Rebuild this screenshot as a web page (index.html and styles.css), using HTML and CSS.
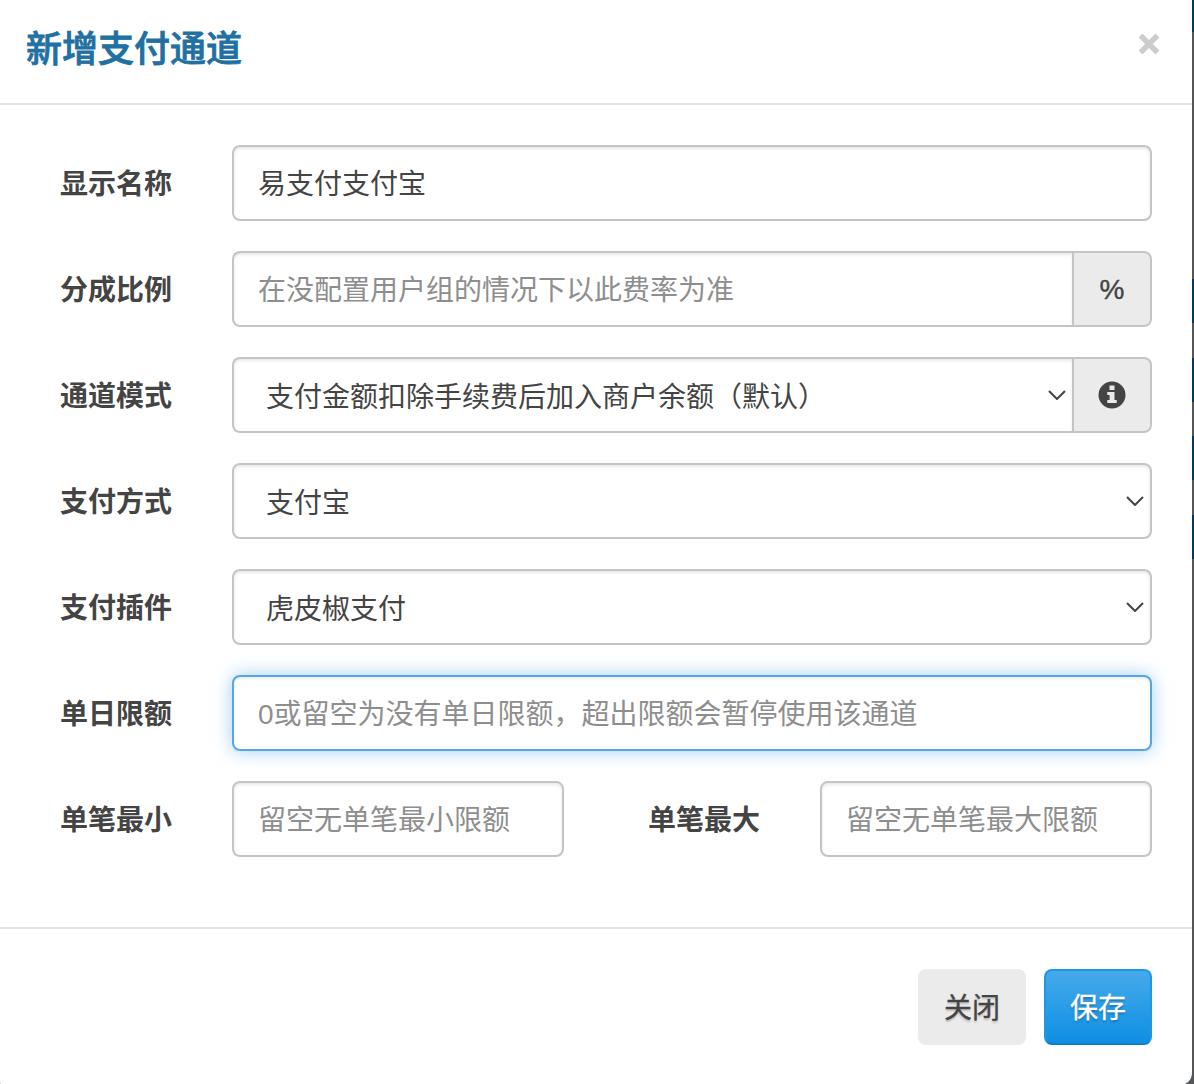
FILE: index.html
```html
<!DOCTYPE html>
<html lang="zh-CN">
<head>
    <meta charset="UTF-8">
    <meta name="viewport" content="width=device-width, initial-scale=1.0">
    <title>新增支付通道</title>
    <link rel="stylesheet" href="styles.css">
</head>
<body>
    <div class="modal">
        <div class="modal-header">
            <h4 class="modal-title">新增支付通道</h4>
            <button type="button" class="close" aria-label="Close">
                <svg width="22" height="22" viewBox="0 0 22 22"><path d="M2.5 2.5L19.5 19.5M19.5 2.5L2.5 19.5" stroke="#ccc" stroke-width="5.4"/></svg>
            </button>
        </div>
        <form class="modal-body">
            <div class="form-group">
                <label for="name">显示名称</label>
                <input type="text" class="form-control" id="name" value="易支付支付宝">
            </div>
            <div class="form-group">
                <label for="rate">分成比例</label>
                <div class="input-group">
                    <input type="text" class="form-control" id="rate" placeholder="在没配置用户组的情况下以此费率为准">
                    <span class="addon percent">%</span>
                </div>
            </div>
            <div class="form-group">
                <label for="mode">通道模式</label>
                <div class="input-group">
                    <div class="select">
                        <select class="form-control" id="mode">
                            <option>支付金额扣除手续费后加入商户余额（默认）</option>
                        </select>
                        <svg class="arrow" width="18" height="10" viewBox="0 0 18 10"><path d="M1 1L9 9L17 1"/></svg>
                    </div>
                    <span class="addon">
                        <svg width="28" height="28" viewBox="0 0 28 28">
                            <circle cx="14" cy="14" r="13.5" fill="#444"/>
                            <path d="M11.5 4.5h5v4.5h-5zM9.3 11h7.2v8h2.2v3H9.3v-3h2.3v-5H9.3z" fill="#ebebeb"/>
                        </svg>
                    </span>
                </div>
            </div>
            <div class="form-group">
                <label for="type">支付方式</label>
                <div class="select">
                    <select class="form-control" id="type">
                        <option>支付宝</option>
                    </select>
                    <svg class="arrow" width="18" height="10" viewBox="0 0 18 10"><path d="M1 1L9 9L17 1"/></svg>
                </div>
            </div>
            <div class="form-group">
                <label for="plugin">支付插件</label>
                <div class="select">
                    <select class="form-control" id="plugin">
                        <option>虎皮椒支付</option>
                    </select>
                    <svg class="arrow" width="18" height="10" viewBox="0 0 18 10"><path d="M1 1L9 9L17 1"/></svg>
                </div>
            </div>
            <div class="form-group">
                <label for="daytop">单日限额</label>
                <input type="text" class="form-control active" id="daytop" placeholder="0或留空为没有单日限额，超出限额会暂停使用该通道">
            </div>
            <div class="form-group split">
                <label for="paymin">单笔最小</label>
                <input type="text" class="form-control" id="paymin" placeholder="留空无单笔最小限额">
                <label for="paymax">单笔最大</label>
                <input type="text" class="form-control" id="paymax" placeholder="留空无单笔最大限额">
            </div>
        </form>
        <div class="modal-footer">
            <button type="button" class="btn btn-white">关闭</button>
            <button type="button" class="btn btn-primary">保存</button>
        </div>
    </div>
</body>
</html>
```
FILE: styles.css
```css
* {
    box-sizing: border-box;
}
body {
    margin: 0;
    height: 1084px;
    overflow: hidden;
    font-family: "Liberation Sans", "Noto Sans CJK SC", sans-serif;
    font-size: 28px;
    color: #444;
    /* dimmed page showing past the dialog */
    background: linear-gradient(#003a5f 0 32px, #555657 32px 279px, #003a5f 279px 323px, #555657 323px 358px, #003a5f 358px 402px, #555657 402px 436px, #003a5f 436px 480px, #555657 480px 515px, #003a5f 515px 559px, #555657 559px);
}
.modal {
    width: 1192px;
    height: 1085px;
    background: #fff;
    border-radius: 0 0 12px 3px;
}
.modal-header {
    display: flex;
    justify-content: space-between;
    align-items: flex-start;
    height: 105px;
    padding: 24px 32px 0 26px;
    border-bottom: 2px solid #e4e4e4;
}
.modal-title {
    margin: 0;
    font-size: 36px;
    font-weight: 500;
    line-height: 52px;
    color: #2170a3;
    -webkit-text-stroke: 0.8px #2170a3;
}
.close {
    display: flex;
    margin-top: 9px;
    padding: 0;
    border: 0;
    background: none;
}
.modal-body {
    padding: 40px 40px 70px 60px;
}
.form-group {
    display: grid;
    grid-template-columns: 172px 1fr;
    align-items: center;
    margin-bottom: 30px;
}
.form-group:last-child {
    margin-bottom: 0;
}
.form-group.split {
    grid-template-columns: 172px 332px 256px 332px;
}
.split .form-control + label {
    padding-left: 84px;
}
label {
    padding-top: 4px;
    font-weight: bold;
    line-height: 40px;
}
.form-control {
    display: block;
    width: 100%;
    height: 76px;
    padding: 0 24px 2px;
    border: 2px solid #c4c4c4;
    border-radius: 8px;
    background: #fff;
    box-shadow: inset 0 2px 3px rgba(0, 0, 0, 0.09);
    font: inherit;
    color: #444;
    appearance: none;
    outline: 0;
}
.form-control:placeholder-shown {
    padding: 3px 24px 0;
}
.form-control::placeholder {
    color: #8e8e8e;
    opacity: 1;
}
.form-control.active {
    border-color: #57a5e5;
    box-shadow: inset 0 2px 3px rgba(0, 0, 0, 0.08), 0 0 18px rgba(82, 168, 236, 0.55);
}
.select {
    position: relative;
    flex: 1;
}
.select .form-control {
    padding: 4px 32px 0;
}
.arrow {
    position: absolute;
    right: 8px;
    top: 33px;
    pointer-events: none;
    fill: none;
    stroke: #444;
    stroke-width: 2;
}
.input-group {
    display: flex;
}
.input-group .form-control {
    border-right: 0;
    border-radius: 8px 0 0 8px;
}
.input-group .arrow {
    right: 6px;
}
.addon {
    display: flex;
    align-items: center;
    justify-content: center;
    flex: 0 0 80px;
    height: 76px;
    border: 2px solid #c4c4c4;
    border-radius: 0 8px 8px 0;
    background: #ebebeb;
}
.percent {
    padding-top: 2px;
    -webkit-text-stroke: 0.4px #444;
}
.modal-footer {
    display: flex;
    justify-content: flex-end;
    gap: 18px;
    padding: 40px 40px 0;
    border-top: 2px solid #e4e4e4;
}
.btn {
    width: 108px;
    height: 76px;
    padding: 0 0 2px;
    border: 2px solid transparent;
    border-radius: 8px;
    font: inherit;
}
.btn-white {
    border-color: #ebebeb;
    background: #ebebeb;
    color: #444;
    text-shadow: 0 2px 2px rgba(0, 0, 0, 0.2);
    -webkit-text-stroke: 0.3px #444;
}
.btn-primary {
    border-color: #1f97e4 #1f97e4 #0f80ca;
    background: linear-gradient(#45aaea, #0e8fe3);
    color: #fff;
    text-shadow: 0 2px 2px rgba(0, 0, 0, 0.25);
    -webkit-text-stroke: 0.3px #fff;
}
```
